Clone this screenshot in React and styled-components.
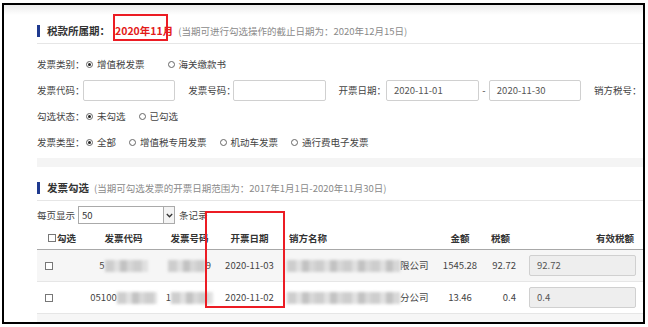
import styled, { createGlobalStyle } from 'styled-components';

const GlobalStyle = createGlobalStyle`
  body {
    margin: 0;
    background: #fff;
    font-family: "Noto Sans CJK SC", "Noto Sans", sans-serif;
    color: #444;
  }
`;

const Frame = styled.div`
  position: relative;
  box-sizing: border-box;
  width: 643px;
  height: 321px;
  margin: 3px 0 0 2px;
  border: 2px solid #000;
  overflow: hidden;
  background: #fff;
`;
const TopStrip = styled.div`
  height: 10px;
  background: linear-gradient(#ececec, #fff);
`;
const Panel = styled.div`
  padding-left: 33px;
  font-size: 9.5px;
  line-height: 1.3;
  white-space: nowrap;
`;
const SectionHead = styled.div`
  box-sizing: border-box;
  display: flex;
  align-items: center;
  height: ${(p) => p.h}px;
  padding-top: ${(p) => p.pt}px;
  border-bottom: 1px solid #e6e6e6;
`;
const Bar = styled.span`
  width: 3px;
  height: 12px;
  margin-right: 7px;
  background: #1f3a8f;
`;
const HeadTitle = styled.span`
  font-size: 10.5px;
  font-weight: bold;
  color: #333;
`;
const RedText = styled.span`
  margin-left: 5px;
  font-size: 10.5px;
  font-weight: bold;
  color: #e31b1b;
`;
const Note = styled.span`
  margin-left: ${(p) => p.ml || 5}px;
  color: #8a8a8a;
`;
const Form = styled.div`
  padding-top: 7px;
`;
const FormRow = styled.div`
  display: flex;
  align-items: center;
  height: 26px;
`;
const Label = styled.span`
  width: ${(p) => p.w}px;
  margin-left: ${(p) => p.ml || 0}px;
  color: #444;
`;
const Option = styled.span`
  display: flex;
  align-items: center;
  margin-right: ${(p) => p.gap}px;
`;
const Radio = styled.span`
  box-sizing: border-box;
  display: inline-flex;
  align-items: center;
  justify-content: center;
  width: 7px;
  height: 7px;
  margin-right: 4px;
  border: 1px solid #666;
  border-radius: 50%;
  &::after {
    content: '';
    width: 3px;
    height: 3px;
    border-radius: 50%;
    background: ${(p) => (p.on ? '#222' : 'transparent')};
  }
`;
const Input = styled.div`
  box-sizing: border-box;
  display: flex;
  align-items: center;
  width: ${(p) => p.w}px;
  height: 21px;
  padding-left: 7px;
  border: 1px solid #d0d0d0;
  border-radius: 2px;
  color: #555;
  background: ${(p) => (p.gray ? '#eeeeee' : '#fff')};
`;
const Dash = styled.span`
  width: 10px;
  text-align: center;
`;
const GrayBand = styled.div`
  height: 9px;
  margin-top: 3px;
  background: #f4f4f4;
`;
const PageRow = styled.div`
  display: flex;
  align-items: center;
  height: 28px;
`;
const Select = styled.div`
  box-sizing: border-box;
  display: flex;
  align-items: center;
  justify-content: space-between;
  width: 97px;
  height: 18px;
  margin: 0 4px 0 3px;
  padding-left: 3px;
  border: 1px solid #aaa;
  color: #333;
`;
const SelectArrow = styled.span`
  box-sizing: border-box;
  display: flex;
  align-items: center;
  justify-content: center;
  width: 11px;
  height: 16px;
  border-left: 1px solid #aaa;
  background: #f4f4f4;
`;
const cols = '55px 63px 69px 51px 160px 50px 35px 122px';
const HeaderRow = styled.div`
  display: grid;
  grid-template-columns: ${cols};
  align-items: center;
  height: 21px;
  padding-bottom: 2px;
  box-sizing: border-box;
  border-bottom: 1px solid #a8a8a8;
  font-weight: bold;
  color: #333;
`;
const Row = styled.div`
  box-sizing: border-box;
  display: grid;
  grid-template-columns: ${cols};
  align-items: center;
  height: 32px;
  border-bottom: 1px solid #e6e6e6;
  background: ${(p) => (p.alt ? '#f6f6f6' : '#fff')};
  color: #444;
`;
const Cell = styled.div`
  display: flex;
  align-items: center;
  justify-content: ${(p) => p.align || 'center'};
  padding: ${(p) => p.pad || '0'};
  min-width: 0;
`;
const Check = styled.span`
  box-sizing: border-box;
  display: inline-block;
  width: 8px;
  height: 8px;
  margin-right: ${(p) => p.mr || 0}px;
  border: 1px solid #777;
  background: #fff;
`;
const Blur = styled.span`
  display: inline-block;
  flex-shrink: 0;
  width: ${(p) => p.w}px;
  height: 12px;
  background: repeating-linear-gradient(90deg, #c9c9c9 0 9px, #dedede 9px 15px, #bdbdbd 15px 22px, #d4d4d4 22px 28px);
  filter: blur(1.6px);
  opacity: 0.9;
`;
const RedBox = styled.div`
  position: absolute;
  left: ${(p) => p.x}px;
  top: ${(p) => p.y}px;
  width: ${(p) => p.w}px;
  height: ${(p) => p.h}px;
  border: 2px solid #ec1c24;
  box-sizing: border-box;
  pointer-events: none;
`;

const rows = [
  { code: ['5', 43, ''], num: ['', 38, '9'], date: '2020-11-03', name: '限公司', amount: '1545.28', tax: '92.72', alt: true },
  { code: ['05100', 40, ''], num: ['1', 42, ''], date: '2020-11-02', name: '分公司', amount: '13.46', tax: '0.4' },
];

function RadioGroup({ options, checked, gap }) {
  return options.map((o, i) => (
    <Option key={o} gap={gap}>
      <Radio on={i === checked} />
      {o}
    </Option>
  ));
}

export default function App() {
  return (
    <Frame>
      <GlobalStyle />
      <TopStrip />
      <Panel>
        <SectionHead h={29} pt={4}>
          <Bar />
          <HeadTitle>税款所属期：</HeadTitle>
          <RedText>2020年11月</RedText>
          <Note>(当期可进行勾选操作的截止日期为：2020年12月15日)</Note>
        </SectionHead>
        <Form>
          <FormRow>
            <Label w={49}>发票类别：</Label>
            <RadioGroup options={['增值税发票', '海关缴款书']} checked={0} gap={23} />
          </FormRow>
          <FormRow>
            <Label w={46}>发票代码：</Label>
            <Input w={94} />
            <Label w={45} ml={13}>发票号码：</Label>
            <Input w={95} />
            <Label w={48} ml={12}>开票日期：</Label>
            <Input w={95}>2020-11-01</Input>
            <Dash>-</Dash>
            <Input w={94}>2020-11-30</Input>
            <Label w={50} ml={13}>销方税号：</Label>
          </FormRow>
          <FormRow>
            <Label w={49}>勾选状态：</Label>
            <RadioGroup options={['未勾选', '已勾选']} checked={0} gap={13} />
          </FormRow>
          <FormRow>
            <Label w={49}>发票类型：</Label>
            <RadioGroup options={['全部', '增值税专用发票', '机动车发票', '通行费电子发票']} checked={0} gap={13} />
          </FormRow>
        </Form>
        <GrayBand />
        <SectionHead h={34} pt={9}>
          <Bar />
          <HeadTitle>发票勾选</HeadTitle>
          <Note>(当期可勾选发票的开票日期范围为：2017年1月1日-2020年11月30日)</Note>
        </SectionHead>
        <PageRow>
          每页显示
          <Select>
            50
            <SelectArrow>
              <svg width="7" height="5" viewBox="0 0 7 5">
                <polyline points="0.8,1 3.5,3.8 6.2,1" fill="none" stroke="#333" strokeWidth="1.3" />
              </svg>
            </SelectArrow>
          </Select>
          条记录
        </PageRow>
        <HeaderRow>
          <Cell align="flex-start" pad="0 0 0 11px">
            <Check mr={1} />
            勾选
          </Cell>
          <Cell>发票代码</Cell>
          <Cell>发票号码</Cell>
          <Cell>开票日期</Cell>
          <Cell align="flex-start" pad="0 0 0 14px">销方名称</Cell>
          <Cell>金额</Cell>
          <Cell align="flex-start" pad="0 0 0 6px">税额</Cell>
          <Cell align="flex-end" pad="0 8px 0 0">有效税额</Cell>
        </HeaderRow>
        {rows.map((r) => (
          <Row key={r.date} alt={r.alt}>
            <Cell align="flex-start" pad="0 0 0 8px">
              <Check />
            </Cell>
            <Cell>
              {r.code[0]}
              <Blur w={r.code[1]} />
            </Cell>
            <Cell>
              {r.num[0]}
              <Blur w={r.num[1]} />
              {r.num[2]}
            </Cell>
            <Cell>{r.date}</Cell>
            <Cell align="flex-start" pad="0 0 0 12px">
              <Blur w={113} />
              {r.name}
            </Cell>
            <Cell>{r.amount}</Cell>
            <Cell align="flex-end" pad="0 4px 0 0">{r.tax}</Cell>
            <Cell align="flex-start" pad="0 6px 0 9px">
              <Input w={107} gray>{r.tax}</Input>
            </Cell>
          </Row>
        ))}
        <Row alt>
          <Cell />
        </Row>
      </Panel>
      <RedBox x={109} y={9} w={55} h={27} />
      <RedBox x={201} y={206} w={80} h={97} />
    </Frame>
  );
}
